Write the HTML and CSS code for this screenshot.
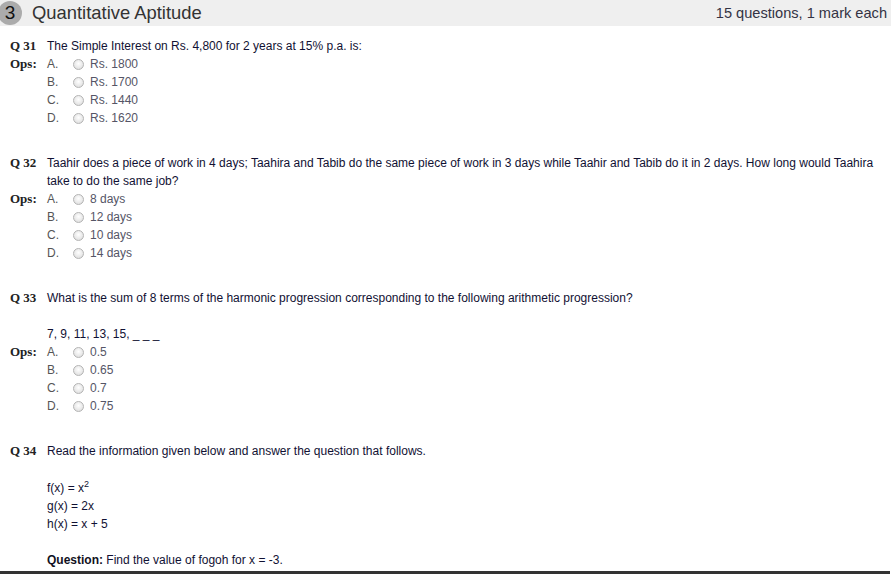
FILE: index.html
```html
<!DOCTYPE html>
<html>
<head>
<meta charset="utf-8">
<link rel="stylesheet" href="styles.css">
</head>
<body>
<div class="page">
  <header class="section-head">
    <div class="head-left">
      <span class="num">3</span>
      <span class="title">Quantitative Aptitude</span>
    </div>
    <span class="meta">15 questions, 1 mark each</span>
  </header>

  <main class="questions">
    <section class="q">
      <div class="qlabel">Q 31</div>
      <div class="qbody"><p>The Simple Interest on Rs. 4,800 for 2 years at 15% p.a. is:</p></div>
      <div class="olabel">Ops:</div>
      <ul class="opts">
        <li><span class="letter">A.</span><span class="radio"></span><span class="otext">Rs. 1800</span></li>
        <li><span class="letter">B.</span><span class="radio"></span><span class="otext">Rs. 1700</span></li>
        <li><span class="letter">C.</span><span class="radio"></span><span class="otext">Rs. 1440</span></li>
        <li><span class="letter">D.</span><span class="radio"></span><span class="otext">Rs. 1620</span></li>
      </ul>
    </section>

    <section class="q">
      <div class="qlabel">Q 32</div>
      <div class="qbody"><p>Taahir does a piece of work in 4 days; Taahira and Tabib do the same piece of work in 3 days while Taahir and Tabib do it in 2 days. How long would Taahira take to do the same job?</p></div>
      <div class="olabel">Ops:</div>
      <ul class="opts">
        <li><span class="letter">A.</span><span class="radio"></span><span class="otext">8 days</span></li>
        <li><span class="letter">B.</span><span class="radio"></span><span class="otext">12 days</span></li>
        <li><span class="letter">C.</span><span class="radio"></span><span class="otext">10 days</span></li>
        <li><span class="letter">D.</span><span class="radio"></span><span class="otext">14 days</span></li>
      </ul>
    </section>

    <section class="q">
      <div class="qlabel">Q 33</div>
      <div class="qbody">
        <p>What is the sum of 8 terms of the harmonic progression corresponding to the following arithmetic progression?</p>
        <p class="gap">7, 9, 11, 13, 15, _ _ _</p>
      </div>
      <div class="olabel">Ops:</div>
      <ul class="opts">
        <li><span class="letter">A.</span><span class="radio"></span><span class="otext">0.5</span></li>
        <li><span class="letter">B.</span><span class="radio"></span><span class="otext">0.65</span></li>
        <li><span class="letter">C.</span><span class="radio"></span><span class="otext">0.7</span></li>
        <li><span class="letter">D.</span><span class="radio"></span><span class="otext">0.75</span></li>
      </ul>
    </section>

    <section class="q">
      <div class="qlabel">Q 34</div>
      <div class="qbody">
        <p>Read the information given below and answer the question that follows.</p>
        <p class="gap fx">f(x) = x<sup>2</sup></p>
        <p>g(x) = 2x</p>
        <p>h(x) = x + 5</p>
        <p class="gap"><b>Question:</b> Find the value of fogoh for x = -3.</p>
      </div>
    </section>
  </main>
  <div class="footer-bar"></div>
</div>
</body>
</html>
```
FILE: styles.css
```css
html, body {
  margin: 0;
  padding: 0;
  background: #ffffff;
}
body {
  font-family: "Liberation Sans", Arial, sans-serif;
  font-size: 12px;
  color: #111133;
  overflow: hidden;
}
.page {
  width: 891px;
  height: 574px;
  display: flex;
  flex-direction: column;
  overflow: hidden;
}
.section-head {
  height: 26px;
  flex: none;
  background: #efefef;
  display: flex;
  align-items: center;
  justify-content: space-between;
  padding-right: 4px;
}
.head-left {
  display: flex;
  align-items: center;
}
.num {
  width: 24px;
  height: 24px;
  border-radius: 50%;
  background: #ababab;
  color: #111111;
  font-size: 19px;
  line-height: 24px;
  text-align: center;
  margin-left: -2px;
  margin-top: -1px;
  font-family: "Liberation Sans", Arial, sans-serif;
}
.title {
  font-size: 18.4px;
  color: #333333;
  margin-left: 10px;
}
.meta {
  font-size: 14.6px;
  color: #333344;
}
.questions {
  flex: 1;
  padding: 11px 0 0 10px;
  overflow: hidden;
}
.q {
  display: grid;
  grid-template-columns: 37px 1fr;
  line-height: 18px;
  margin-bottom: 27px;
}
.qlabel, .olabel {
  font-family: "Liberation Serif", "Times New Roman", serif;
  font-weight: bold;
  font-size: 13px;
  color: #222222;
}
.qbody p {
  margin: 0;
  padding-right: 10px;
}
.qbody p.gap {
  margin-top: 18px;
}
.qbody p.fx {
  margin-top: 19px;
}
.qbody sup {
  font-size: 9px;
  line-height: 0;
  vertical-align: 5px;
}
.qbody b {
  font-weight: bold;
  color: #111122;
}
.opts {
  list-style: none;
  margin: 0;
  padding: 0;
}
.opts li {
  display: flex;
  align-items: center;
  height: 18px;
  color: #555555;
}
.letter {
  width: 26px;
}
.radio {
  width: 11px;
  height: 11px;
  box-sizing: border-box;
  border-radius: 50%;
  border: 1px solid #b4b4b4;
  background: radial-gradient(circle at 50% 40%, #ffffff 0%, #e8e8e8 60%, #d4d4d4 100%);
  margin-right: 6px;
}
.otext {
  color: #555566;
}
.footer-bar {
  flex: none;
  height: 3px;
  width: 890px;
  background: #333333;
}
```
